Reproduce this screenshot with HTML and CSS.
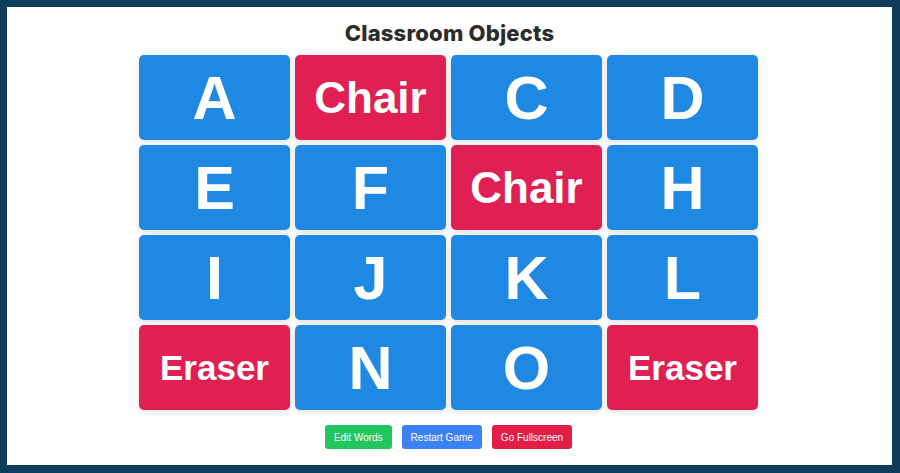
FILE: index.html
```html
<!DOCTYPE html>
<html>
<head>
<meta charset="utf-8">
<link rel="stylesheet" href="styles.css">
</head>
<body>
<div class="frame">
  <main class="page">
    <h1 class="title">Classroom Objects</h1>
    <div class="grid">
      <div class="tile blue letter">A</div>
      <div class="tile red word">Chair</div>
      <div class="tile blue letter">C</div>
      <div class="tile blue letter">D</div>
      <div class="tile blue letter">E</div>
      <div class="tile blue letter">F</div>
      <div class="tile red word">Chair</div>
      <div class="tile blue letter">H</div>
      <div class="tile blue letter">I</div>
      <div class="tile blue letter">J</div>
      <div class="tile blue letter">K</div>
      <div class="tile blue letter">L</div>
      <div class="tile red long">Eraser</div>
      <div class="tile blue letter">N</div>
      <div class="tile blue letter">O</div>
      <div class="tile red long">Eraser</div>
    </div>
    <div class="controls">
      <button class="btn green">Edit Words</button>
      <button class="btn blue-btn">Restart Game</button>
      <button class="btn red-btn">Go Fullscreen</button>
    </div>
  </main>
</div>
</body>
</html>
```
FILE: styles.css
```css
html, body {
  margin: 0;
  padding: 0;
  width: 900px;
  height: 473px;
  overflow: hidden;
}
.frame {
  box-sizing: border-box;
  width: 900px;
  height: 473px;
  background: #0e3d5c;
  padding: 7px 8px 8px 7px;
}
.page {
  box-sizing: border-box;
  height: 100%;
  background: #ffffff;
  display: flex;
  flex-direction: column;
  align-items: center;
  padding-top: 10px;
}
.title {
  margin: 0;
  height: 30px;
  line-height: 32px;
  font-family: "Inter", "Open Sans", sans-serif;
  font-weight: 800;
  font-size: 22px;
  color: #2b2b2b;
  letter-spacing: 0.2px;
}
.grid {
  margin-top: 8px;
  display: grid;
  grid-template-columns: repeat(4, 151px);
  grid-template-rows: repeat(4, 85px);
  gap: 5px;
  margin-left: -2px;
}
.tile {
  border-radius: 5px;
  display: flex;
  align-items: center;
  justify-content: center;
  color: #ffffff;
  font-family: "Liberation Sans", Arial, sans-serif;
  font-weight: 700;
  box-shadow: 0 2px 6px rgba(0, 0, 0, 0.12);
}
.blue { background: #1e88e2; }
.red { background: #e01f52; }
.letter { font-size: 61px; }
.word { font-size: 44px; }
.long { font-size: 35px; }
.controls {
  margin-top: 15px;
  display: flex;
  gap: 10px;
  margin-left: -2px;
}
.btn {
  height: 24px;
  border: none;
  border-radius: 3px;
  padding: 0 9px;
  font-family: "Liberation Sans", Arial, sans-serif;
  font-size: 10px;
  color: #ffffff;
}
.green { background: #22c55e; }
.blue-btn { background: #3b82f6; }
.red-btn { background: #e11d48; }
```
